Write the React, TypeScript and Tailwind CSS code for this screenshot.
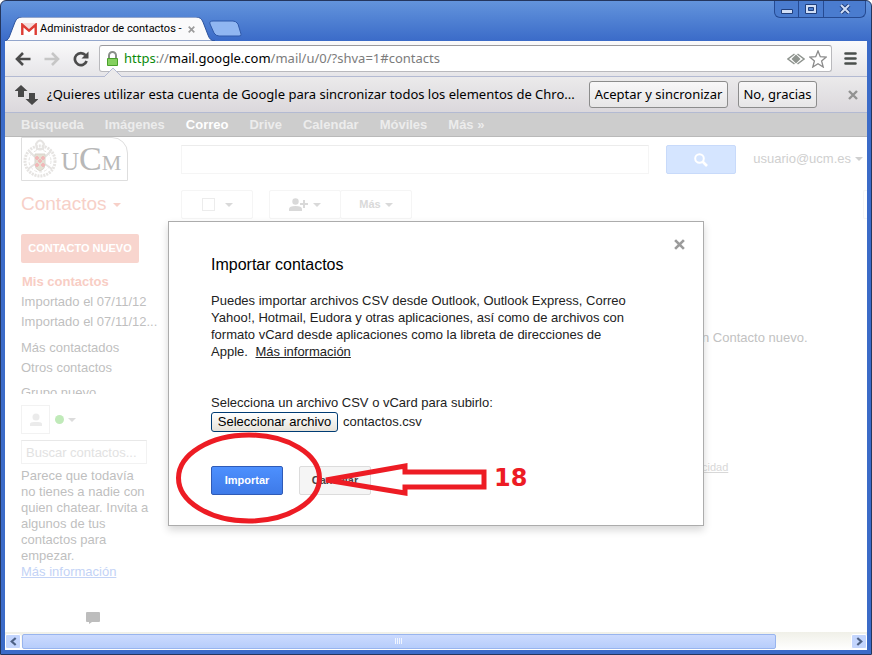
import type { ReactNode } from 'react';

const NAV = ['Búsqueda', 'Imágenes', 'Correo', 'Drive', 'Calendar', 'Móviles', 'Más »'];

function Caret({ className = '' }: { className?: string }) {
    return (
        <svg viewBox="0 0 8 4" className={`w-2 h-1 fill-current ${className}`} aria-hidden="true">
            <path d="M0 0h8L4 4z" />
        </svg>
    );
}

function Cross({ className = '' }: { className?: string }) {
    return (
        <svg viewBox="0 0 10 10" className={`stroke-current ${className}`} fill="none" strokeWidth="2.4" aria-hidden="true">
            <path d="M1 1l8 8M9 1l-8 8" />
        </svg>
    );
}

function TitleBar() {
    return (
        <header className="flex items-start justify-between h-[40px] shrink-0">
            <div className="relative self-end flex items-center h-6 w-[204px]">
                <svg viewBox="0 0 237 24" className="absolute left-0 top-0 w-[237px] h-6" aria-hidden="true">
                    <path d="M0 24C3 23 4 21 5 18L10 5Q12 0 17 0H191Q196 0 198 5L203 18Q205 24 210 24Z" fill="#fafafb" stroke="#2d539d" />
                    <path d="M205 7Q204 4 208 4H228Q231 4 233 7L236 17Q237 19 234 19H214Q211 19 209 16Z" fill="#90b6f1" stroke="#2f59aa" />
                </svg>
                <div className="relative flex items-center flex-1 min-w-0 pl-4 font-[Roboto,sans-serif] text-[11px] text-black">
                    <svg viewBox="0 0 16 12" className="w-4 h-3 shrink-0 mr-[3px]" aria-hidden="true">
                        <path d="M0 0h16v12H0z" fill="#f3dcdc" />
                        <path d="M1.3 12V1.800L8 7.600l6.700-5.800V12" fill="#fff" stroke="#dd3c34" strokeWidth="2.4" />
                    </svg>
                    <span className="whitespace-nowrap">Administrador de contactos -</span>
                    <button aria-label="Cerrar pestaña" className="ml-auto mr-[14px] text-[#9c9c9c]">
                        <Cross className="w-[7px] h-[7px]" />
                    </button>
                </div>
            </div>
            <div className="flex h-[17px] mr-px border border-t-0 border-[#254a92] rounded-b-md divide-x divide-[#254a92] bg-[#4a7ccf]">
                <button aria-label="Minimizar" className="w-6 flex justify-center items-center">
                    <svg viewBox="0 0 12 5" className="w-3 h-[5px] mt-1"><path d="M.5 .5h11v4H.5z" fill="#d0def6" stroke="#203f7c" /></svg>
                </button>
                <button aria-label="Maximizar" className="w-[25px] flex justify-center items-center">
                    <svg viewBox="0 0 12 10" className="w-3 h-[10px]">
                        <path d="M.5 .5h11v9H.5z" fill="#d0def6" stroke="#203f7c" />
                        <path d="M3.5 3.5h5v3h-5z" fill="#4a7ccf" stroke="#203f7c" />
                    </svg>
                </button>
                <button aria-label="Cerrar" className="w-[41px] flex justify-center items-center">
                    <svg viewBox="0 0 12 10" className="w-3 h-[10px]" fill="none">
                        <path d="M2 1l8 8M10 1L2 9" stroke="#203f7c" strokeWidth="4" />
                        <path d="M2 1l8 8M10 1L2 9" stroke="#d0def6" strokeWidth="2" />
                    </svg>
                </button>
            </div>
        </header>
    );
}

function Toolbar() {
    return (
        <div className="flex items-center h-9 shrink-0 pl-[10px] pr-[10px] bg-linear-to-b from-[#fafafb] to-[#e6e5e8] border-b border-[#b3bad2]">
            <button aria-label="Atrás" className="text-[#4b4b4b]">
                <svg viewBox="0 0 16 14" className="w-4 h-[14px]" fill="none" stroke="currentColor" strokeWidth="2.6"><path d="M15.500 7H2M8 1L2 7l6 6" /></svg>
            </button>
            <button aria-label="Adelante" className="ml-[13px] text-[#c6c6c6]">
                <svg viewBox="0 0 16 14" className="w-4 h-[14px]" fill="none" stroke="currentColor" strokeWidth="2.6"><path d="M.5 7H14M8 1l6 6-6 6" /></svg>
            </button>
            <button aria-label="Volver a cargar" className="ml-[13px] text-[#4b4b4b]">
                <svg viewBox="0 0 16 16" className="w-4 h-4">
                    <path d="M12.500 4.200A6 6 0 1 0 13.600 10" fill="none" stroke="currentColor" strokeWidth="2.700" />
                    <path d="M15.500 .5v7H8.500z" fill="currentColor" />
                </svg>
            </button>
            <div className="flex items-center flex-1 min-w-0 h-[27px] ml-[10px] pl-[2px] pr-1 bg-white border border-[#b9b9bd] border-t-[#9a9a9e] rounded-[3px]">
                <svg viewBox="0 0 13 16" className="w-[13px] h-4 ml-1 mr-[5px] shrink-0" aria-hidden="true">
                    <path d="M3 8V4.500a3.500 3.500 0 0 1 7 0V8" fill="none" stroke="#8a8f8a" strokeWidth="2" />
                    <path d="M1.500 7.500h10v7h-10z" fill="#84d05f" stroke="#4aa02c" />
                </svg>
                <div className="flex-1 min-w-0 font-['Noto_Sans',sans-serif] text-[13px] text-[#7c7c7c] whitespace-nowrap">
                    <span className="text-[#0a8a0a]">https</span>://<span className="text-black">mail.google.com</span>/mail/u/0/?shva=1#contacts
                </div>
                <svg viewBox="0 0 18 12" className="w-[18px] h-3 shrink-0 mr-1" aria-hidden="true">
                    <path d="M7.500 1L1 6l6.500 5M10.500 1L17 6l-6.500 5" fill="none" stroke="#8f948f" strokeWidth="1.500" />
                    <path d="M9 1.500L13.500 6 9 10.500 4.500 6z" fill="#8f948f" />
                </svg>
                <svg viewBox="0 0 18 18" className="w-[18px] h-[18px] shrink-0" aria-hidden="true">
                    <path d="M9 1l2.300 5.700 6 .4-4.700 3.900 1.600 6L9 13.700 3.800 17l1.600-6L.7 7.100l6-.4z" fill="#fff" stroke="#8b8b8b" strokeWidth="1.300" />
                </svg>
            </div>
            <button aria-label="Menú" className="ml-3 text-[#4a4f4c]">
                <svg viewBox="0 0 13 13" className="w-[13px] h-[13px]" fill="none" stroke="currentColor" strokeWidth="2.600" strokeLinecap="round"><path d="M1.500 1.500h10M1.500 6.500h10M1.500 11.500h10" /></svg>
            </button>
        </div>
    );
}

function InfoBar() {
    const button = 'h-[27px] border border-[#8c8c8c] rounded-[3px] bg-linear-to-b from-[#f8f7f8] to-[#e7e6e7] whitespace-nowrap';
    return (
        <div className="relative flex items-center h-9 shrink-0 pl-[10px] pr-[9px] bg-linear-to-b from-[#ebeaeb] to-[#dbd8dc] border-b border-[#b3bad2] font-['Noto_Sans',sans-serif] text-[13px] text-black">
            {/* notch pointing at the padlock */}
            <svg viewBox="0 0 18 10" className="absolute left-[99px] top-[-10px] w-[18px] h-[10px]" aria-hidden="true">
                <path d="M0 10l9-9 9 9" fill="#ebeaeb" stroke="#b3bad2" />
            </svg>
            <svg viewBox="0 0 23 20" className="w-[23px] h-5 shrink-0" fill="#484848" aria-hidden="true">
                <path d="M6 0l6.500 6H9v6H3V6H-.5z" />
                <path d="M14 8h6v6h3.500L17 20l-6.500-6H14z" />
            </svg>
            <p className="flex-1 min-w-0 ml-[9px] whitespace-nowrap">
                ¿Quieres utilizar esta cuenta de Google para sincronizar todos los elementos de Chro...
            </p>
            <button className={`${button} w-[139px]`}>Aceptar y sincronizar</button>
            <button className={`${button} w-[79px] ml-[10px]`}>No, gracias</button>
            <button aria-label="Cerrar barra" className="ml-[31px] text-[#929292]"><Cross className="w-[10px] h-[10px]" /></button>
        </div>
    );
}

function Crest() {
    return (
        <svg viewBox="0 0 36 42" className="w-9 h-[42px] shrink-0" fill="none" stroke="#e6e4e2" aria-hidden="true">
            <circle cx="18" cy="23" r="15" strokeWidth="3" strokeDasharray="2 1" />
            <circle cx="18" cy="23" r="11" strokeDasharray="3 2" />
            <path d="M14 6q4-7 8 0l-1 5h-6zM7 13l6 6M29 13l-6 6M6 31l7-5M30 31l-7-5" strokeWidth="2" />
            <path d="M13 16h10v11q0 4-5 6-5-2-5-6z" fill="#e4e1d4" stroke="#d8d4cd" />
            <path d="M15 18l2 2-2 2-2-2zM21 18l2 2-2 2-2-2zM18 21l2 2-2 2-2-2zM15 25l2 2-2 2-2-2zM21 25l2 2-2 2-2-2z" fill="#f1b9b9" stroke="#f1b9b9" />
        </svg>
    );
}

function Sidebar() {
    return (
        <aside className="w-[136px] shrink-0 text-[13px] text-[#bfbfbf]">
            <button className="h-[29px] w-[118px] bg-[#f8d5ce] rounded-[2px] text-[11px] font-bold text-white whitespace-nowrap">CONTACTO NUEVO</button>
            <ul className="mt-[9px] h-[122px] overflow-hidden leading-5 whitespace-nowrap">
                <li className="-ml-4 pl-[15px] border-l-2 border-[#f6c6bd] font-bold text-[#f8cdc4]">Mis contactos</li>
                <li>Importado el 07/11/12</li>
                <li>Importado el 07/11/12...</li>
                <li className="mt-[6px]">Más contactados</li>
                <li>Otros contactos</li>
                <li className="mt-[5px]">Grupo nuevo</li>
            </ul>
            <div className="flex items-center mt-[11px]">
                <span className="flex items-center justify-center w-[29px] h-[29px] border border-[#f2f2f2]">
                    <svg viewBox="0 0 14 14" className="w-[14px] h-[14px]" fill="#ebebeb" aria-hidden="true"><circle cx="7" cy="4" r="3.500" /><path d="M1 13V11q0-2 4-2h4q4 0 4 2v2z" /></svg>
                </span>
                <span className="w-[9px] h-[9px] ml-[5px] rounded-full bg-[#c0eab9]" />
                <Caret className="ml-1 text-[#dcdcdc]" />
            </div>
            <input aria-label="Buscar contactos" placeholder="Buscar contactos..." className="block w-[126px] h-6 mt-[6px] px-1 border border-[#f2f2f2] border-t-[#e8e8e8] placeholder:text-[#e2e2e2]" />
            <p className="mt-1 leading-4 whitespace-nowrap">
                Parece que todavía<br />no tienes a nadie con<br />quien chatear. Invita a<br />algunos de tus<br />contactos para<br />empezar.<br />
                <a href="#info" className="text-[#c3d3f6] underline">Más información</a>
            </p>
            <svg viewBox="0 0 14 12" className="w-[14px] h-3 mt-8 ml-[65px] fill-[#bdbdbd]" aria-hidden="true"><path d="M1 0h12q1 0 1 1v8q0 1-1 1H6l-3 2V10H1q-1 0-1-1V1q0-1 1-1z" /></svg>
        </aside>
    );
}

function ToolButton({ children, label, className = '' }: { children?: ReactNode; label?: string; className?: string }) {
    return (
        <button aria-label={label} className={`flex items-center justify-center h-[29px] w-[72px] border border-[#f5f5f5] rounded-[2px] text-[11px] font-bold text-[#d9d9d9] ${className}`}>
            {children}
            <Caret className="ml-1" />
        </button>
    );
}

function ImportDialog() {
    return (
        <section role="dialog" aria-labelledby="import-title" className="absolute left-1/2 top-[84px] -translate-x-1/2 w-[536px] px-[42px] pt-[34px] pb-[30px] bg-white border border-[#acacac] shadow-[0_4px_8px_rgba(0,0,0,0.16)] text-[13px] text-[#222] whitespace-nowrap">
            <button aria-label="Cerrar" className="absolute right-[18px] top-[17px] text-[#9b9b9b]"><Cross className="w-[11px] h-[11px]" /></button>
            <h1 id="import-title" className="text-[16px] leading-[18px] text-black">Importar contactos</h1>
            <p className="mt-[18px] leading-[17px]">
                Puedes importar archivos CSV desde Outlook, Outlook Express, Correo<br />
                Yahoo!, Hotmail, Eudora y otras aplicaciones, así como de archivos con<br />
                formato vCard desde aplicaciones como la libreta de direcciones de<br />
                Apple. <a href="#mas" className="ml-1 underline">Más información</a>
            </p>
            <label htmlFor="archivo" className="block mt-[34px] leading-[17px]">Selecciona un archivo CSV o vCard para subirlo:</label>
            <div className="flex items-center gap-[5px] mt-px">
                <button id="archivo" className="h-5 w-[127px] border border-[#003c74] rounded-[3px] bg-linear-to-b from-white to-[#e6e3da] text-black leading-4">Seleccionar archivo</button>
                <span>contactos.csv</span>
            </div>
            <div className="flex gap-4 mt-[34px] text-[11px] font-bold">
                <button className="h-[29px] w-[72px] bg-linear-to-b from-[#4d90fe] to-[#3e7ae8] border border-[#2f5bb7] rounded-[2px] text-white">Importar</button>
                <button className="h-[29px] w-[72px] bg-[#f5f5f5] border border-[#dcdcdc] rounded-[2px] text-[#444]">Cancelar</button>
            </div>
            {/* step marker drawn over the buttons */}
            <svg viewBox="0 0 320 96" className="absolute left-[6px] top-[208px] w-[320px] h-24 pointer-events-none" fill="none" stroke="#ed1c24" strokeWidth="5" aria-hidden="true">
                <ellipse cx="74" cy="48" rx="70.500" ry="43" />
                <path d="M151 50L230 36V42H309V57H230V63Z" />
            </svg>
            <strong className="absolute left-[325px] top-[242px] font-['DejaVu_Sans',sans-serif] text-[24px] leading-7 text-[#ed1c24]">18</strong>
        </section>
    );
}

function Page() {
    return (
        <main className="relative flex-1 px-4 bg-white overflow-hidden">
            <div className="flex items-start">
                <div className="flex items-center w-[107px] h-[44px] mr-[53px] shrink-0 border border-[#dedede] rounded-tr-2xl">
                    <Crest />
                    <span className="flex items-baseline ml-[3px] font-['Liberation_Serif',serif] leading-none text-[#b8b8b8]">
                        <span className="text-[25px]">U</span><span className="text-[34px]">C</span><span className="text-[22px]">M</span>
                    </span>
                </div>
                <input aria-label="Buscar" className="flex-1 min-w-0 h-[29px] mt-2 border border-[#f5f5f5] border-t-[#ececec]" />
                <button aria-label="Buscar en contactos" className="flex items-center justify-center w-[70px] h-[29px] mt-2 ml-[17px] bg-[#d5e5ff] border border-[#c8dafa] rounded-[2px]">
                    <svg viewBox="0 0 14 14" className="w-[14px] h-[14px]" fill="none" stroke="#fff" aria-hidden="true"><circle cx="5.500" cy="5.500" r="4.300" strokeWidth="2" /><path d="M8.500 8.500l4.500 4.500" strokeWidth="2.600" /></svg>
                </button>
                <button className="flex items-center mt-[14px] ml-[17px] -mr-3 text-[13px] leading-4 text-[#cfcfcf]">usuario@ucm.es<Caret className="ml-1" /></button>
            </div>
            <div className="flex items-center h-[29px] mt-[9px]">
                <h2 className="w-[160px] flex items-center gap-[6px] text-[19px] text-[#f7d0c8]">Contactos <Caret /></h2>
                <ToolButton label="Seleccionar"><span className="w-[13px] h-[13px] mr-[6px] border border-[#ececec]" /></ToolButton>
                <ToolButton label="Añadir a" className="ml-4">
                    <svg viewBox="0 0 20 14" className="w-5 h-[14px]" fill="currentColor" aria-hidden="true"><circle cx="6.500" cy="3.500" r="3.200" /><path d="M0 13v-2q0-3 6.500-3T13 11v2zM14 2h2v3h3v2h-3v3h-2V7h-3V5h3z" /></svg>
                </ToolButton>
                <ToolButton className="-ml-px">Más</ToolButton>
                <span className="ml-auto -mr-4 w-1 h-[29px] border border-r-0 border-[#f5f5f5] rounded-l-[2px]" />
            </div>
            <div className="flex mt-[15px]">
                <Sidebar />
                <div className="flex-1 pt-[95px] pl-[545px] text-[13px] text-[#c2c2c2] whitespace-nowrap">
                    <p className="leading-[18px]">n Contacto nuevo.</p>
                    <a href="#privacidad" className="block mt-[112px] leading-4 text-[11px] text-[#d8d8d8] underline">cidad</a>
                </div>
            </div>
            <ImportDialog />
        </main>
    );
}

function ScrollBar() {
    const arrow = 'flex items-center justify-center w-4 h-[15px] rounded-[2px] border border-white bg-[#c3d5fd] text-[#4d6185]';
    return (
        <div className="flex items-center h-[18px] shrink-0 bg-linear-to-b from-[#f0f0e8] to-white">
            <button aria-label="Desplazar a la izquierda" className={arrow}><svg viewBox="0 0 8 10" className="w-[7px] h-[9px]" fill="none" stroke="currentColor" strokeWidth="2.500"><path d="M6.500 1L2 5l4.500 4" /></svg></button>
            <div className="flex-1 pl-px">
                <div className="flex items-center justify-center w-[91%] h-[15px] rounded-[2px] border border-[#98b4ee] bg-linear-to-b from-[#cbdafe] to-[#b7cdfb]">
                    <svg viewBox="0 0 8 6" className="w-2 h-[6px]" stroke="#f0f5ff" aria-hidden="true"><path d="M.5 0v6M2.500 0v6M4.500 0v6M6.500 0v6" /></svg>
                </div>
            </div>
            <button aria-label="Desplazar a la derecha" className={arrow}><svg viewBox="0 0 8 10" className="w-[7px] h-[9px]" fill="none" stroke="currentColor" strokeWidth="2.500"><path d="M1.500 1L6 5l-4.500 4" /></svg></button>
        </div>
    );
}

export default function App() {
    return (
        <div className="flex flex-col min-h-screen px-1 pb-1 border border-[#24365e] rounded-t-md bg-linear-to-b from-[#6394dc] to-[#3b6bc8] to-[40px] font-['Liberation_Sans',Arial,sans-serif]">
            <TitleBar />
            <Toolbar />
            <InfoBar />
            <nav className="flex items-center gap-[21px] h-6 shrink-0 px-4 bg-[#cdcdcd] border-b border-[#b9b9b9] text-[13px] font-bold">
                {NAV.map((item) => (
                    <a key={item} href="#nav" className={item === 'Correo' ? 'text-white' : 'text-[#ececec]'}>{item}</a>
                ))}
            </nav>
            <Page />
            <ScrollBar />
        </div>
    );
}
